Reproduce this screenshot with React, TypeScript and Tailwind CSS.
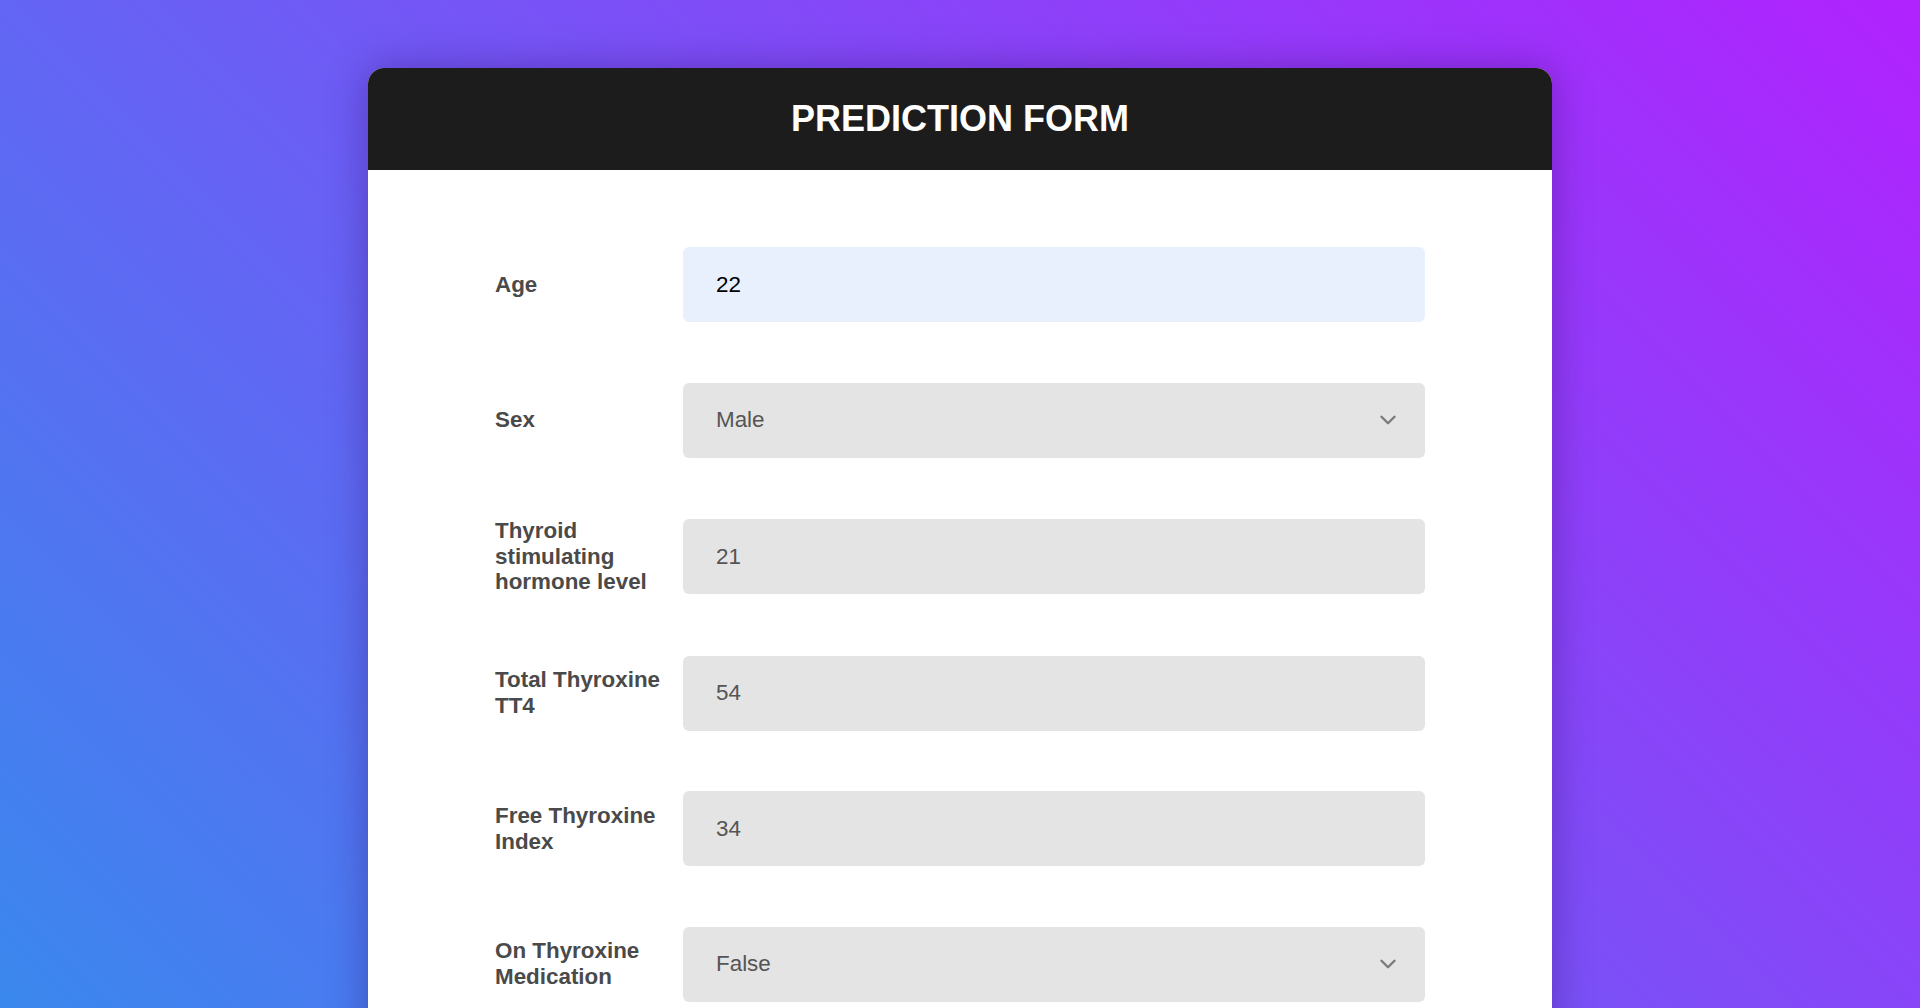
import { ChevronDown } from 'lucide-react';

const fields = [
  { label: 'Age', value: '22', type: 'input', autofill: true },
  { label: 'Sex', value: 'Male', type: 'select', options: ['Male', 'Female'] },
  { label: 'Thyroid stimulating hormone level', value: '21', type: 'input' },
  { label: 'Total Thyroxine TT4', value: '54', type: 'input' },
  { label: 'Free Thyroxine Index', value: '34', type: 'input' },
  { label: 'On Thyroxine Medication', value: 'False', type: 'select', options: ['False', 'True'] },
];

function Field({ field }: { field: any }) {
  return (
    <div className="flex items-center">
      <label className="w-[188px] pr-4 text-[22.4px] leading-[25.7px] font-bold text-[#4a4a4a]">{field.label}</label>
      {field.type == 'select' ? (
        <div className="relative w-[742px]">
          <select
            defaultValue={field.value}
            className="h-[75px] w-full appearance-none rounded-md bg-[#e4e4e4] px-[33px] text-[22.4px] text-[#555] outline-none"
          >
            {field.options.map((o: string) => (
              <option key={o}>{o}</option>
            ))}
          </select>
          <ChevronDown
            className="pointer-events-none absolute right-[24px] top-1/2 -translate-y-1/2 text-[#7a7a7a]"
            size={26}
            strokeWidth={2.2}
          />
        </div>
      ) : (
        <input
          defaultValue={field.value}
          className={
            field.autofill
              ? 'h-[75px] w-[742px] rounded-md bg-[#e8f0fe] px-[33px] text-[22.4px] text-black outline-none'
              : 'h-[75px] w-[742px] rounded-md bg-[#e4e4e4] px-[33px] text-[22.4px] text-[#555] outline-none'
          }
        />
      )}
    </div>
  );
}

export default function App() {
  return (
    <div className="min-h-screen bg-[linear-gradient(45deg,#3a88ee,#b122fe)] bg-fixed pt-[68px] pb-16 font-['Liberation_Sans',Arial,sans-serif]">
      <div className="mx-auto w-[1184px] overflow-hidden rounded-2xl bg-white shadow-[0_0_40px_rgba(40,0,90,0.35)]">
        <div className="flex h-[102px] items-center justify-center bg-[#1c1c1c]">
          <h1 className="text-[36px] font-bold text-white">PREDICTION FORM</h1>
        </div>
        <form className="mx-auto flex w-[930px] flex-col gap-[60.5px] pt-[77px] pb-24">
          {fields.map((f) => (
            <Field key={f.label} field={f} />
          ))}
        </form>
      </div>
    </div>
  );
}
